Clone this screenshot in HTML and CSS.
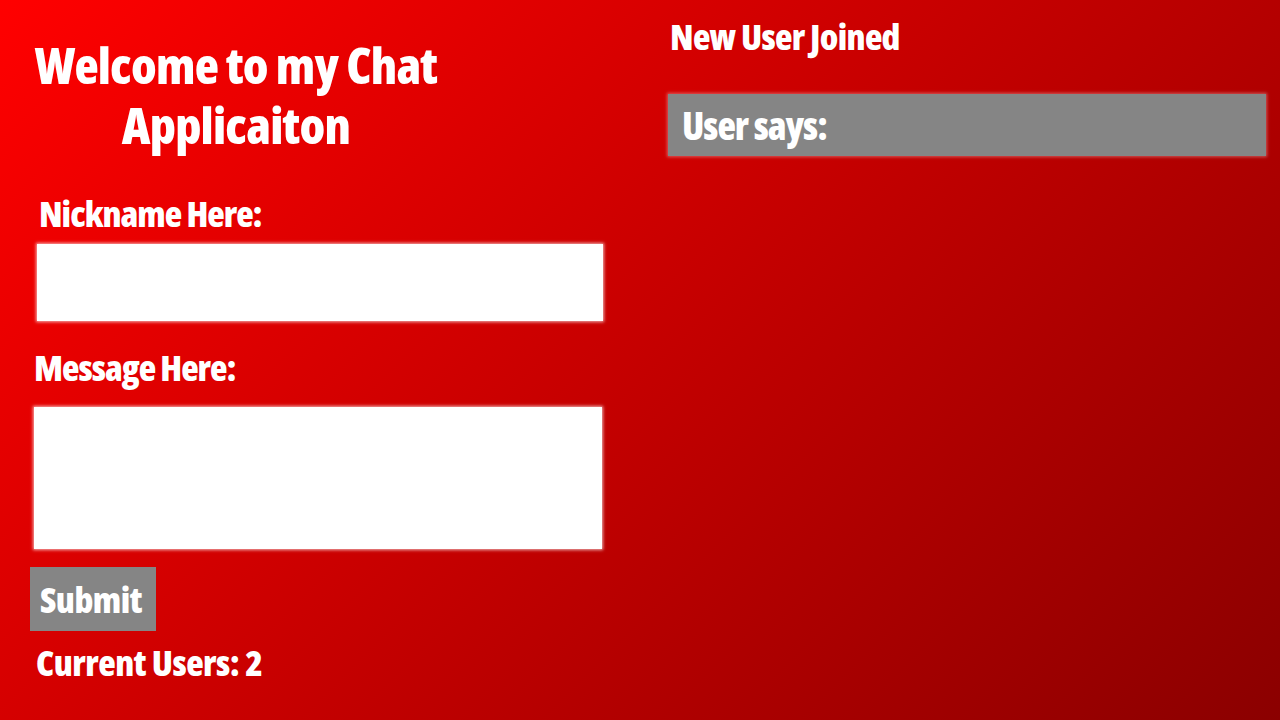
FILE: index.html
```html
<!DOCTYPE html>
<html>
<head>
<meta charset="utf-8">
<link rel="stylesheet" href="styles.css">
<title>Chat</title>
</head>
<body>
<div class="page">
  <div class="left">
    <h1 class="title">Welcome to my Chat<br>Applicaiton</h1>
    <label class="label nick-label">Nickname Here:</label>
    <input class="field nick" type="text">
    <label class="label msg-label">Message Here:</label>
    <textarea class="field msg"></textarea>
    <button class="submit">Submit</button>
    <div class="users">Current Users: 2</div>
  </div>
  <div class="right">
    <div class="joined">New User Joined</div>
    <div class="bubble">User says:</div>
  </div>
</div>
</body>
</html>
```
FILE: styles.css
```css
html, body {
  margin: 0;
  height: 720px;
}
body {
  background: linear-gradient(135deg, #ff0000, #8b0000);
  font-family: "Open Sans", "DejaVu Sans", sans-serif;
  font-stretch: 75%;
  font-weight: 800;
  color: #fff;
  overflow: hidden;
}
.page {
  display: flex;
  height: 720px;
}
.left {
  width: 640px;
  display: flex;
  flex-direction: column;
  align-items: flex-start;
}
.title {
  width: 472px;
  margin: 35px 0 0 0;
  text-align: center;
  font-size: 50px;
  line-height: 60px;
  font-weight: 800;
  letter-spacing: -0.8px;
}
.label {
  display: block;
  font-size: 36px;
  line-height: 40px;
  letter-spacing: -1px;
}
.nick-label {
  margin: 39px 0 0 39px;
}
.field {
  box-sizing: border-box;
  border: none;
  background: #fff;
  box-shadow: 0 0 3px 1px rgba(255, 255, 255, 0.7);
  outline: none;
  display: block;
}
.nick {
  width: 566px;
  height: 77px;
  margin: 10px 0 0 37px;
}
.msg-label {
  margin: 27px 0 0 34px;
}
.msg {
  width: 568px;
  height: 142px;
  margin: 19px 0 0 34px;
  resize: none;
}
.submit {
  margin: 18px 0 0 30px;
  width: 126px;
  height: 64px;
  background: #858585;
  border: none;
  color: #fff;
  font-family: inherit;
  font-stretch: 75%;
  font-weight: 800;
  font-size: 36px;
  letter-spacing: -0.5px;
  padding: 0 10px;
  text-align: left;
}
.users {
  margin: 12px 0 0 36px;
  font-size: 36px;
  line-height: 40px;
  letter-spacing: -0.5px;
}
.right {
  flex: 1;
  padding: 14px 14px 0 28px;
}
.joined {
  font-size: 36px;
  line-height: 46px;
  margin-left: 2px;
  letter-spacing: -0.7px;
}
.bubble {
  margin-top: 34px;
  height: 62px;
  box-sizing: border-box;
  background: #858585;
  box-shadow: 0 0 3px 1px rgba(255, 255, 255, 0.35);
  padding: 6px 14px;
  font-size: 38px;
  line-height: 50px;
  letter-spacing: -1px;
}
```
